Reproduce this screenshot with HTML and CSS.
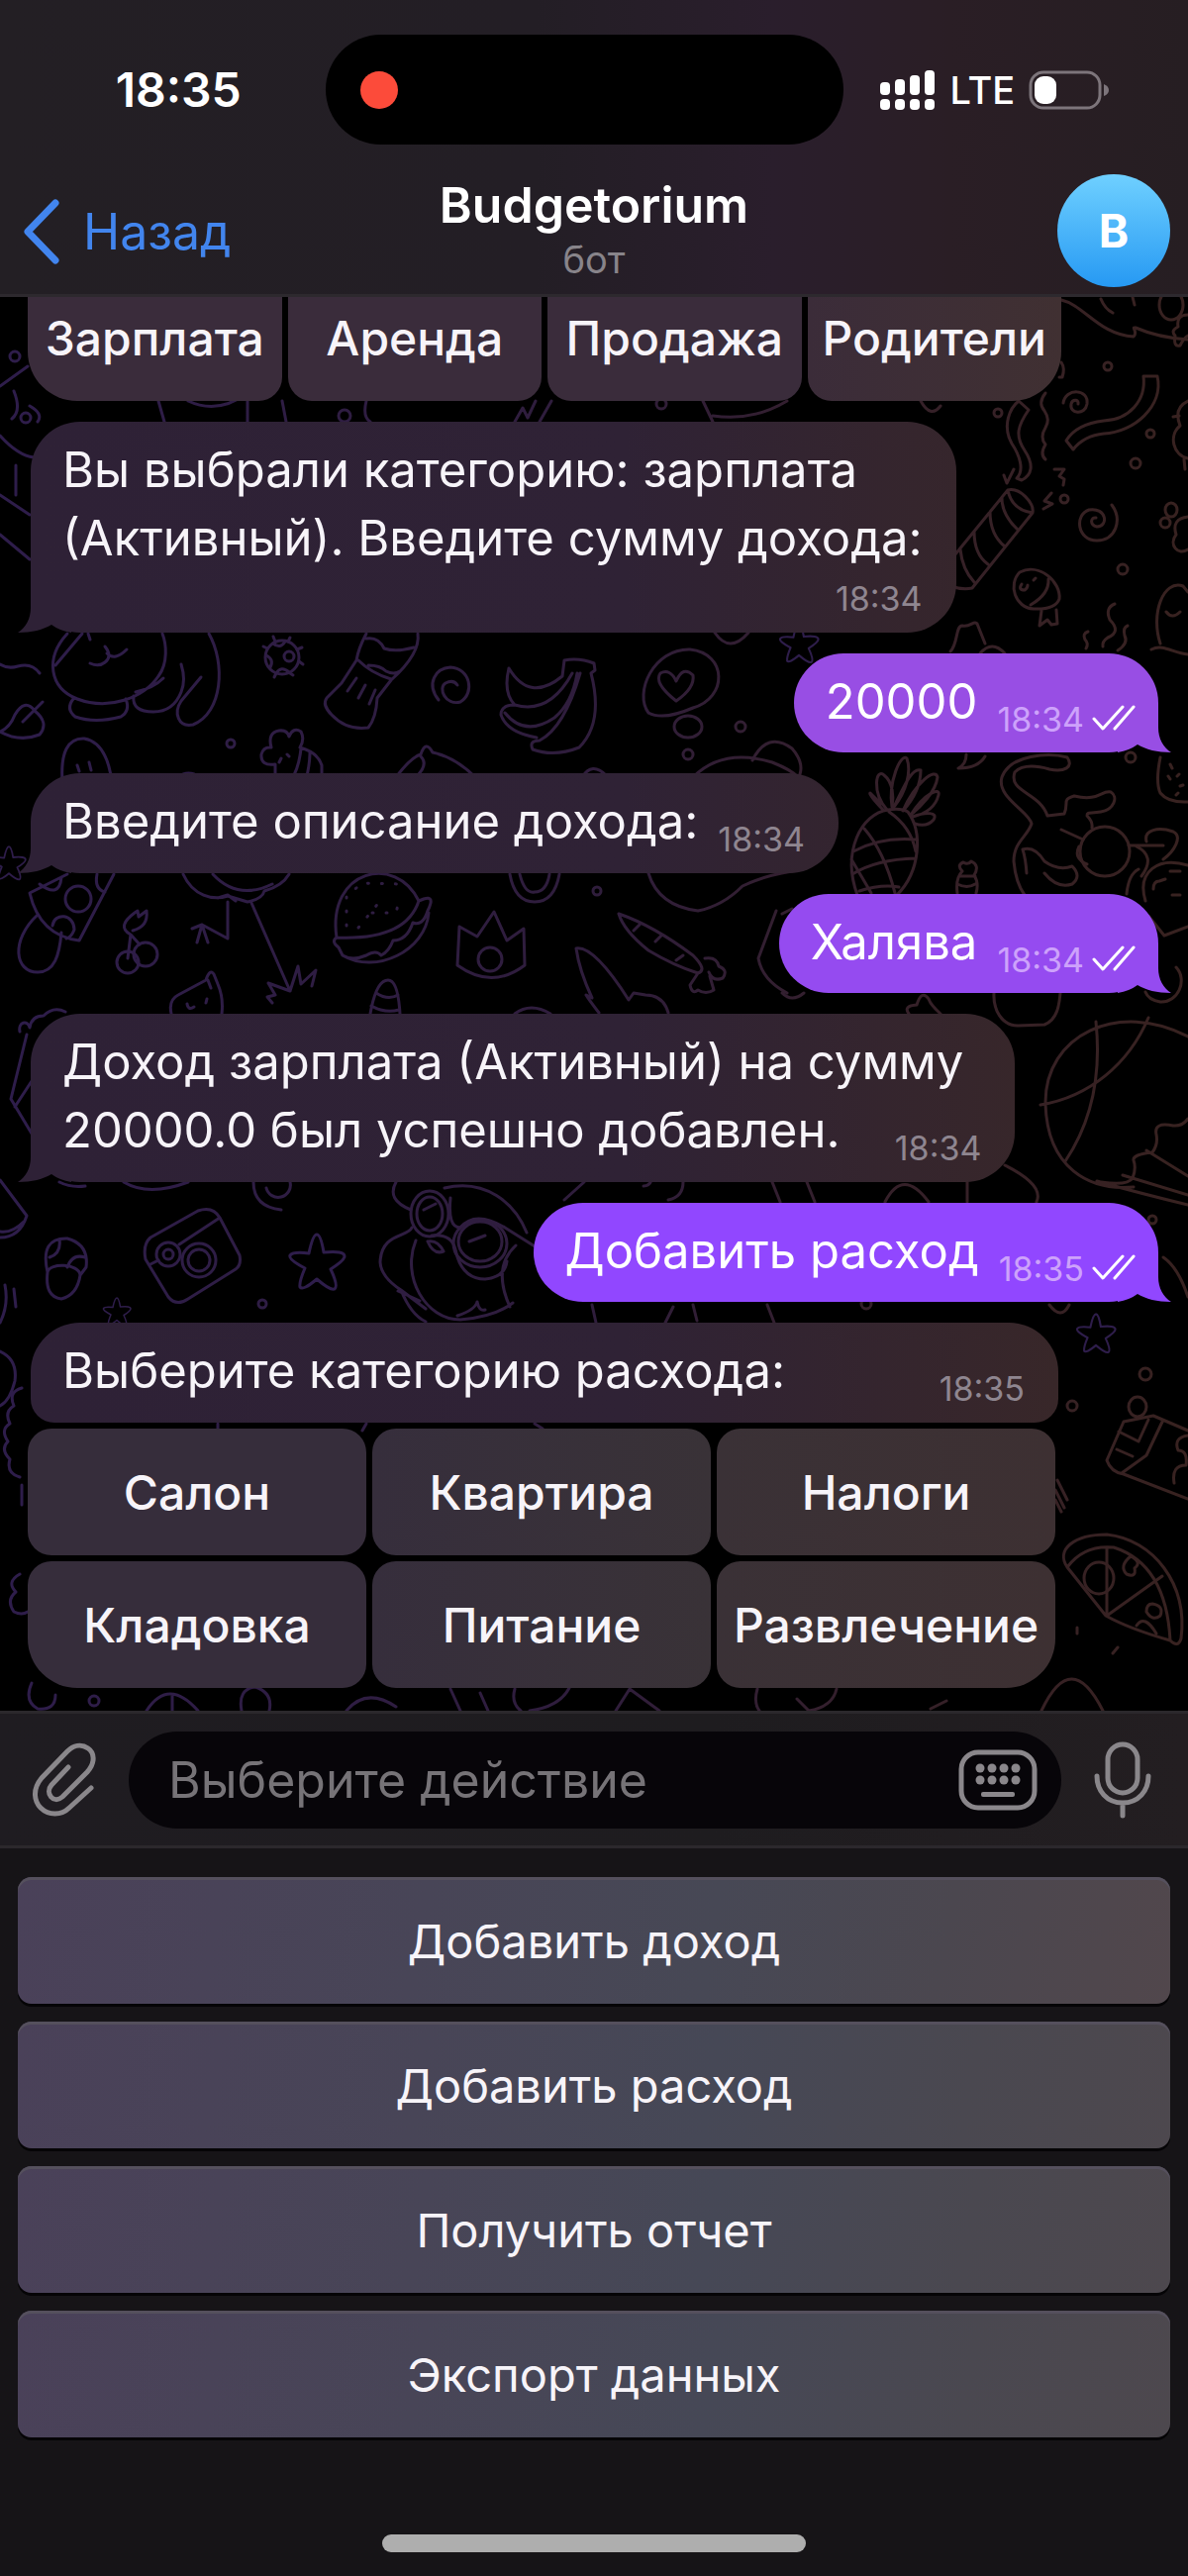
FILE: index.html
```html
<!DOCTYPE html>
<html lang="ru">
<head>
<meta charset="utf-8">
<meta name="viewport" content="width=device-width, initial-scale=1">
<title>Budgetorium</title>
<link rel="stylesheet" href="styles.css">
</head>
<body>
<div class="app">
  <header class="top">
    <div class="status">
      <time class="clock">18:35</time>
      <div class="island"><span class="rec"></span></div>
      <div class="signals">
        <svg width="58" height="42" viewBox="0 0 58 42" fill="#fff" aria-hidden="true">
          <rect x="1" y="13" width="10" height="13" rx="4"/><rect x="16" y="10" width="10" height="16" rx="4"/><rect x="31" y="6" width="10" height="20" rx="4"/><rect x="46" y="1" width="10" height="25" rx="4"/>
          <rect x="1" y="30" width="10" height="11" rx="4"/><rect x="16" y="30" width="10" height="11" rx="4"/><rect x="31" y="30" width="10" height="11" rx="4"/><rect x="46" y="30" width="10" height="11" rx="4"/>
        </svg>
        <span class="lte">LTE</span>
        <svg width="82" height="40" viewBox="0 0 82 40" aria-hidden="true">
          <rect x="2" y="2" width="70" height="36" rx="13" fill="none" stroke="#7d757b" stroke-width="3"/>
          <rect x="6" y="6" width="22" height="28" rx="9" fill="#fff"/>
          <path d="M76 14q5 2 5 6t-5 6z" fill="#7d757b"/>
        </svg>
      </div>
    </div>
    <div class="nav">
      <a class="back" href="#">
        <svg width="44" height="68" viewBox="0 0 44 68" fill="none" stroke="#4285ee" stroke-width="7" stroke-linecap="round" stroke-linejoin="round" aria-hidden="true"><path d="M38 5 10 34l28 29"/></svg>
        <span>Назад</span>
      </a>
      <div class="title"><h1>Budgetorium</h1><p>бот</p></div>
      <a class="avatar" href="#">B</a>
    </div>
  </header>

  <main class="chat">
    <svg class="wallpaper" viewBox="0 300 1200 1428" preserveAspectRatio="xMidYMin slice" aria-hidden="true">
      <defs>
        <linearGradient id="ink" gradientUnits="userSpaceOnUse" x1="0" y1="0" x2="1200" y2="0">
          <stop offset="0" stop-color="#2e1d4b"/><stop offset=".5" stop-color="#2f1d3c"/><stop offset=".75" stop-color="#352029"/><stop offset="1" stop-color="#382220"/>
        </linearGradient>
        <path id="star" d="M0-28Q4-28 7-10Q28-12 28-6Q28-2 14 7Q22 24 18 27Q14 29 0 17Q-14 29-17 25Q-18 20-12 6Q-29-3-27-7Q-24-11-8-9Q-4-28 0-28z"/>
      </defs>
      <g fill="none" stroke="url(#ink)" stroke-width="3" stroke-linecap="round" stroke-linejoin="round">
        <!-- streamers, candy and party cracker, upper right -->
        <path d="M1072 303C1095 308 1110 338 1145 340C1150 335 1142 330 1147 331Q1170 341 1200 343M1112 302q4 10 12 14M1144 300l2 8"/>
        <ellipse cx="1183" cy="308" rx="12" ry="15"/><path d="M1200 318q-12 0-10 12q-8 4-3 9q-2 12 5 10q4-8 8-10"/>
        <circle cx="1119" cy="370" r="4"/><circle cx="1008" cy="417" r="4"/><circle cx="1162" cy="438" r="4"/><circle cx="1147" cy="468" r="5"/><circle cx="1075" cy="504" r="4"/><circle cx="1134" cy="575" r="5"/>
        <path d="M1074 407C1076 392 1100 392 1098 408C1096 420 1080 418 1082 408C1083 403 1090 403 1089 408"/>
        <path d="M1155 380h14C1176 410 1145 437 1115 438Q1095 440 1084 454L1077 445C1085 432 1098 427 1115 425C1140 424 1158 405 1155 380z"/>
        <path d="M1200 405Q1185 412 1192 430C1180 440 1185 460 1200 463M1191 420l-6 1M1196 464l1 10"/>
        <path d="M1029 405L1039 414C1028 430 1025 440 1035 455C1045 470 1042 480 1032 485L1027 483C1035 475 1030 460 1022 448C1012 430 1020 412 1029 405"/>
        <path d="M1056 397q-8 10-1 18q6 9 1 17q-6 10 0 17q-6 10 0 15M1072 366q4 6 1 15h-3"/>
        <path d="M960 566L1018 495C1030 492 1045 508 1043 518L982 594Q972 596 960 592M1018 495Q1022 515 1043 518M1012 503Q1012 520 1028 535M1000 517Q1000 540 1015 552M984 537Q984 560 998 570M970 555Q972 575 984 588"/>
        <path d="M1014 480l3 8l7-14M1065 474h10l-5 7l5 3l-1 6M1062 498l-7 8l8 3l-9 5"/>
        <path d="M1123 510C1134 525 1127 546 1108 546C1088 546 1085 520 1100 515C1118 512 1120 532 1108 532C1100 530 1102 522 1107 523"/>
        <ellipse cx="1183" cy="515" rx="6" ry="7"/><circle cx="1177" cy="528" r="5"/><path d="M1200 522Q1183 524 1188 540C1180 550 1190 562 1200 555"/>
        <path d="M1044 615C1025 614 1018 590 1030 578C1050 568 1072 588 1070 605Q1066 616 1044 615M1059 585Q1060 600 1041 611M1052 617l-2 15l8-6l4 5l6-1l-1-14M1032 590q-4 6 3 6q3-2 3-5M1044 586l2-2"/>
        <path d="M1126 610q-10 4-5 16q12 12-2 18q-6 4-5 9M1139 632q-5 2-3 10q4 8-7 15M1099 638q-6 2-3 8q4 4 1 9"/>
        <path d="M1172 650C1162 620 1175 585 1195 592l5 6M1178 618q6 8 14 0M1163 656C1175 650 1185 660 1200 661"/>
        <path d="M960 658C968 650 965 632 972 632C980 634 984 626 987 630L995 650M990 660q12-14 25 0"/>
        <!-- strip under the first keyboard row -->
        <path d="M0 390L28 370M14 395q8 20-2 28M30 410q14 8 8 16M160 405l6 21M190 405q30 14 60-8v29M285 405l4 21M370 405q-4 16 4 21M520 426l8-14l5 10l8-17M545 426l12-21M710 405l10 21M720 420q40 6 75-15M930 405q10 18 20 5"/><circle cx="26" cy="422" r="5"/><circle cx="348" cy="420" r="6"/><circle cx="668" cy="408" r="5"/><circle cx="15" cy="360" r="5"/>
        <path d="M0 440q18 20 34 22M0 500l30 20M0 540l30 25M16 470v30"/>
        <!-- dog, sock, virus, bananas -->
        <path d="M68 640C45 665 50 695 78 706C110 718 145 705 160 683C170 670 168 650 164 640M83 640L56 672M89 640l2 6M106 653q8 10 0 16q-6 5-15 1M108 660q8 8 20-4M74 706q-8 10 2 18q20 7 46 0q10-6 5-18M135 703q-2 16 20 16q20 0 28-20q5-12 0-28M165 685q-10 10-28 14M211 640C228 670 225 720 195 732C180 735 175 720 183 708L203 684"/>
        <path d="M0 671q8 5 18 2q14-4 22 7M0 739Q10 735 15 722Q25 705 35 718Q50 730 40 742Q20 750 0 739M23 729L43 709"/>
        <circle cx="285" cy="664" r="17"/><circle cx="292" cy="663" r="5"/><path d="M276 650q7 6 12-2M269 662q8 4 4 12M279 680q5-8 13-1M278 648l-2-5M291 648l2-4M270 655l-4-2M300 656l5-2M302 668l4 3M279 680l-2 4M293 680l3 2"/>
        <path d="M370 640Q362 655 360 667L345 690L330 705Q325 712 335 722Q350 738 372 735Q380 725 381 705L395 687Q425 660 422 640M362 667Q375 680 395 686M370 645q12-2 18 10q12 4 30-1M372 672q12 0 18 6q8 4 14 0M360 685l-9 13M369 692l-7 13M379 697l-6 14"/>
        <path d="M443 707C430 690 440 675 455 674C475 675 480 700 465 709C450 713 442 695 450 690Q458 686 462 692"/><circle cx="233" cy="751" r="4"/>
        <path d="M63 790Q60 745 85 746Q108 750 113 790M78 773l2 6M90 770l2 8"/>
        <path d="M278 790v-18q-15 2-14-10q2-8 10-7q-4-15 8-17q8-1 10 6q4-10 12-5q4 8-1 16q18 5 22 18v12M304 756q-2 20-10 32M313 760q0 12-4 28M282 770l2-4M290 762l2 2"/>
        <path d="M400 785Q415 765 425 762q5-15 12-2Q460 765 480 785M425 764q8 8-4 20"/>
        <path d="M514 675Q535 710 568 683L570 667Q585 664 600 670L601 677L597 680Q610 730 585 755Q560 765 538 757Q534 748 545 748Q570 735 586 680M514 675Q508 700 520 712Q555 722 578 680M510 720Q530 745 560 725Q578 710 583 680M520 712Q506 712 506 722Q512 740 542 745"/>
        <path d="M655 720C640 700 660 655 697 656C735 660 735 705 700 715Q670 728 655 720M683 708Q660 690 667 680Q677 675 683 688Q690 672 700 682Q702 695 683 708"/>
        <ellipse cx="695" cy="734" rx="14" ry="11"/><circle cx="748" cy="734" r="5"/><circle cx="695" cy="762" r="5"/>
        <use href="#star" transform="translate(807 650) scale(.7)"/>
        <path d="M722 639q15 22 34 0M700 785Q730 755 780 770Q800 778 806 785M760 768q15-30 40-12q12 14 8 26M588 785q10-16 24-2M180 785q10-8 22 0"/>
        <!-- pineapple, cat and dog -->
        <path d="M897 818C870 822 850 860 866 904M917 820C932 840 930 880 906 904M897 818Q910 816 917 820M873 837Q893 860 904 902M898 820Q920 835 925 860M862 860Q890 845 925 848M861 883Q885 868 925 867M868 900Q890 893 908 896M860 868Q870 885 880 902"/>
        <path d="M896 818C880 800 885 775 893 783C902 790 903 805 901 815C897 790 910 760 916 766C921 780 915 800 903 815C915 790 922 775 930 778C930 795 922 808 912 819C925 790 945 775 947 785C945 800 930 815 920 823C935 800 950 795 948 803C945 815 935 822 922 825C935 820 948 820 943 828Q936 836 924 832M892 818Q877 802 879 801L890 812"/>
        <path d="M967 902q-2-15 5-22q-6-6 1-9q5 3 8-1q9 4 3 14q5 8 2 18M969 885h16M967 893q10 5 18 0M976 762q0 10-8 14q20 0 27-12"/>
        <path d="M1058 824C1050 800 1018 800 1025 780Q1035 770 1060 777C1075 780 1085 775 1078 765C1060 760 1020 762 1012 785C1006 805 1040 820 1042 832C1038 845 1024 850 1024 870Q1026 892 1035 904M1058 824L1075 822C1080 810 1072 808 1085 804C1110 810 1112 798 1122 800C1130 805 1125 818 1112 820C1100 822 1098 820 1098 824Q1104 830 1103 836M1037 882q-1-15-4-24q12-4 22 12q14 10 28 5q10 10 0 18Q1068 898 1055 882M1072 838l22 10M1090 855q-6 12 8 18"/>
        <circle cx="1116" cy="860" r="25"/><path d="M1140 854h35M1158 850C1155 838 1170 835 1185 840C1195 845 1186 860 1175 868M1148 855q20 10 5 30M1138 903q2-20 12-25M1157 910C1148 880 1170 865 1200 874M1182 880h10M1184 904h8M1165 898q0-8 6-8l6-2M1160 925L1176 945L1200 936M1172 765q-5 25 0 36q8 10 28 9M1182 772l2 4M1180 784l2 3M1189 784l2-2M1192 794l3-1M1188 803l2-2"/><circle cx="1142" cy="765" r="5"/>
        <!-- middle band -->
        <use href="#star" transform="translate(9 872) scale(.6)"/>
        <path d="M68 883L30 902Q40 945 80 950L115 883M40 893q20 15 22-7M98 883q-3 15 8 18M53 935c2-14 22-12 22 4q-3 8-8 9M38 924C10 950 15 982 38 982C55 982 60 965 62 942"/><circle cx="79" cy="908" r="13"/>
        <circle cx="147" cy="964" r="12"/><circle cx="129" cy="972" r="11"/><path d="M129 968L132 944L141 954M132 944q-15-8 4-22l3-2l1 6l8-6q2 16-14 20"/>
        <path d="M185 883C195 905 215 910 230 905L250 911Q265 908 267 900Q285 895 292 883M215 883Q240 910 275 893M220 907l10-3l8 6M230 911V948L204 934l-10 4M204 934l-5 18M204 934l6 18M254 912L293 1001l-22-8l7 12l-8 2l5 6M293 1001l8-25l3 18l15-14l-4 16"/>
        <path d="M173 1024Q170 1010 180 1005L208 990q4-12 8-6l4 10Q226 1008 224 1024M210 990l3 8M189 1014q1 7 7 3M208 1013l1-4"/>
        <path d="M340 947C330 878 400 862 423 910Q410 950 340 947q-6 4 2 10l4 8q10 6 24 0q10-6 15 0q8-4 12-15q14 0 20-18q10 4 15-12q8-16-4-12L423 910M346 965C380 985 430 960 433 922"/><path stroke-dasharray="1 13" d="M350 935V905L366 892L405 893M362 937L384 910M376 922h24l4-16"/>
        <path d="M462 975L464 936L482 946L499 921L512 950L529 938L530 975Q497 1000 462 975z"/><circle cx="495" cy="969" r="12"/>
        <path d="M374 1024Q380 990 392 990Q402 990 404 1024M380 1003q12 8 22 2M375 1016q14 8 28 4M515 883q5 28 25 28q20 0 25-28M525 883q5 20 15 18q12 0 15-18"/><circle cx="603" cy="900" r="4"/>
        <path d="M655 882Q665 915 705 920Q730 915 750 895Q770 885 800 880M625 923Q660 935 700 965Q715 980 705 983Q680 975 655 960Q630 940 625 923M705 983l-8 12q2 10 8 5q8 5 16 0l-4-14M712 968q12-2 14 8q10 4 4 12q-10 4-14-6M640 940l6-6M668 945l-6 6M690 965l-7 5"/>
        <path d="M605 1023Q595 1010 592 1005L598 1008Q585 980 582 958Q600 955 635 1010L640 1003L652 1005Q670 1005 675 1023M520 1024q16-12 36 0M800 918l-10 5M784 920L766 968Q770 990 795 1003M790 1003q10 10 22 0"/>
        <path d="M27 1045L11 1110L32 1145M20 1042c-2-10 8-12 10-4q2-12 14-12q10-10 22-4M15 1118L32 1092"/>
        <!-- basketball and shell, right -->
        <path d="M918 1024q-6-8 8-9q5-16 12-6q2 6 12 15M1004 1003C1003 1020 1012 1036 1028 1036L1055 1035C1068 1030 1070 1015 1071 1003M1188 977C1200 990 1190 1013 1172 1012Q1160 1010 1157 1002"/>
        <path d="M1200 1047C1130 1010 1055 1045 1056 1115C1058 1180 1100 1203 1145 1199M1107 1032C1112 1080 1105 1130 1076 1173M1160 1028C1140 1075 1100 1108 1051 1116M1200 1130q-6 8-15 7q-20-4-17 9q2 10-4 18q-20 2-19 8q3 8-1 18q-5 8-32 4M1134 1187L1200 1207M1158 1162L1200 1188M1108 1193Q1150 1205 1200 1217"/>
        <path d="M894 1214q18-35 44 0M977 1194v20M1015 1177q40 20 32 37M570 1212l20-18M690 1194q0 15-15 18M650 1198q6 0 8-6M780 1194l8 20M815 1194l8 20"/><circle cx="1164" cy="1232" r="4"/>
        <!-- camera, acorn, star, monkey in goggles -->
        <path d="M0 1192L27 1228Q20 1250 0 1250M24 1234Q12 1246 0 1244M5 1298q4 20-5 38M14 1302l2 18M125 1194q25 15 65 0M60 1194q12 6 26 4M256 1194q0 25 28 28M269 1200a10 10 0 1 0 24-6"/>
        <path d="M152 1250L200 1223Q215 1218 222 1230L242 1268Q244 1278 238 1282L190 1312Q178 1320 170 1310L147 1272Q144 1257 152 1250zM152 1277L160 1273M181 1257L222 1230"/><circle cx="170" cy="1267" r="12"/><circle cx="170" cy="1267" r="5"/><circle cx="201" cy="1273" r="17"/><circle cx="201" cy="1273" r="11"/>
        <use href="#star" x="320" y="1275"/><use href="#star" transform="translate(118 1325) scale(.5)"/><circle cx="265" cy="1317" r="4"/>
        <path d="M48 1285Q40 1250 68 1251Q90 1257 87 1280L81 1288C80 1276 50 1275 48 1285Q45 1310 62 1312Q78 1308 81 1288M50 1270q12-4 10-18M68 1280q5-14 18-10"/>
        <ellipse cx="434" cy="1226" rx="19" ry="23"/><ellipse cx="434" cy="1226" rx="13" ry="17"/><ellipse cx="485" cy="1256" rx="27" ry="24"/><ellipse cx="485" cy="1254" rx="22" ry="20"/>
        <path d="M400 1194Q390 1212 415 1222M416 1240C412 1250 385 1245 384 1275Q385 1290 405 1303L430 1322M420 1253C405 1290 430 1333 465 1333Q500 1330 518 1316M449 1200C490 1190 520 1215 532 1245M455 1210Q452 1240 465 1240Q480 1222 510 1240L545 1262M436 1248q20-2 24 14q6 30 30 30q20-2 22-18M405 1303q10 25 25 32M402 1304l22 10M482 1315q-2 8-20 14M482 1315q2 10 8 8M432 1254q10-2 16 10q-10 4-16-10M428 1222l12-6M474 1254l16-6M515 1320q-18-40 6-62"/>
        <!-- gift, pizza, sun and scallops -->
        <path d="M598 1318l4 18M680 1320l-8 16M700 1318l4 16M775 1318l7 18M1060 1318q12 16 20 0M1175 1270q15 10 25 40"/><circle cx="875" cy="1317" r="5"/><use href="#star" transform="translate(1107 1347) scale(.7)"/><circle cx="1157" cy="1388" r="6"/><circle cx="1083" cy="1420" r="5"/>
        <ellipse cx="1149" cy="1421" rx="9" ry="10"/><path d="M1200 1445L1165 1430L1135 1436L1118 1475Q1122 1487 1135 1489L1200 1514M1175 1434L1158 1470L1133 1488M1130 1446L1150 1456L1160 1434M1128 1464l16 7M1200 1450q-15 2-10 15q10 0 8 15q-15 0-12 18M1068 1495l10 20M1066 1505l9 18M1066 1515l6 12"/>
        <path d="M1078 1583C1066 1565 1085 1550 1118 1550C1165 1555 1200 1600 1193 1655Q1190 1665 1182 1657Q1140 1645 1117 1632L1078 1583M1078 1583Q1095 1560 1125 1563Q1178 1580 1182 1657M1118 1563V1632L1174 1592M1142 1572q12 6 4 12q2 10-8 6q-8-8 4-18M1164 1620q12 2 8 12q-8 6-14-4q0-8 6-8M1148 1642q8-12 20 8"/><ellipse cx="1110" cy="1594" rx="15" ry="16"/>
        <path d="M1052 1728q30-64 62 0M1088 1650v-6M1040 1668l-6-8M1124 1670l5-6M22 1402q-14 4-8 18q-10 6-4 18q-10 6-2 18q-8 8 2 18q-4 14 10 18M22 1500v20M20 1590q-14 8-4 18q-10 8-2 20q8 4 14 0M0 1365q18 8 15 30q-5 20-15 25"/>
        <circle cx="95" cy="1718" r="5"/><path d="M32 1700q-8 18 6 26q18 2 18-14M148 1728q22-34 52 0M174 1713v15M244 1728q-4-22 14-24q18 6 14 24M350 1728q20-24 50-4M455 1706l10 22M485 1710l8 18M520 1706q-4 14 6 22M535 1728q30-4 40-23M622 1728l14-22l30 22M765 1706q-4 14 2 22M805 1716l12 12q24-4 28-22M940 1726l16-8"/>
        <path d="M220 1438v5M370 1438l-4 7M540 1438l8 5"/>
      </g>
    </svg>

    <div class="keys keys-cut">
      <button>Зарплата</button><button>Аренда</button><button>Продажа</button><button>Родители</button>
    </div>

    <article class="msg in stacked">
      <p>Вы выбрали категорию: зарплата<br>(Активный). Введите сумму дохода:</p><time>18:34</time>
      <svg class="tail" viewBox="0 0 54 50" aria-hidden="true"><path d="M13 0V25C13 36 8 45 0 50C14 50 26 47 34 42Q42 48 54 50V0z"/></svg>
    </article>
    <article class="msg out warm">
      <p>20000</p><time>18:34</time>
      <svg class="checks" viewBox="0 0 44 26" aria-hidden="true"><path d="M2 14l9 10L31 2M23 24L42 2"/></svg>
      <svg class="tail" viewBox="0 0 54 50" aria-hidden="true"><path d="M13 0V25C13 36 8 45 0 50C14 50 26 47 34 42Q42 48 54 50V0z"/></svg>
    </article>
    <article class="msg in">
      <p>Введите описание дохода:</p><time>18:34</time>
      <svg class="tail" viewBox="0 0 54 50" aria-hidden="true"><path d="M13 0V25C13 36 8 45 0 50C14 50 26 47 34 42Q42 48 54 50V0z"/></svg>
    </article>
    <article class="msg out mid">
      <p>Халява</p><time>18:34</time>
      <svg class="checks" viewBox="0 0 44 26" aria-hidden="true"><path d="M2 14l9 10L31 2M23 24L42 2"/></svg>
      <svg class="tail" viewBox="0 0 54 50" aria-hidden="true"><path d="M13 0V25C13 36 8 45 0 50C14 50 26 47 34 42Q42 48 54 50V0z"/></svg>
    </article>
    <article class="msg in overlap">
      <p>Доход зарплата (Активный) на сумму<br>20000.0 был успешно добавлен.</p><time>18:34</time>
      <svg class="tail" viewBox="0 0 54 50" aria-hidden="true"><path d="M13 0V25C13 36 8 45 0 50C14 50 26 47 34 42Q42 48 54 50V0z"/></svg>
    </article>
    <article class="msg out">
      <p>Добавить расход</p><time>18:35</time>
      <svg class="checks" viewBox="0 0 44 26" aria-hidden="true"><path d="M2 14l9 10L31 2M23 24L42 2"/></svg>
      <svg class="tail" viewBox="0 0 54 50" aria-hidden="true"><path d="M13 0V25C13 36 8 45 0 50C14 50 26 47 34 42Q42 48 54 50V0z"/></svg>
    </article>
    <div class="prompt">
      <article class="msg in wide"><p>Выберите категорию расхода:</p><time>18:35</time></article>
      <div class="keys keys-grid">
        <button>Салон</button><button>Квартира</button><button>Налоги</button>
        <button>Кладовка</button><button>Питание</button><button>Развлечение</button>
      </div>
    </div>
  </main>

  <footer class="bottom">
    <form class="composer">
      <button class="icon" type="button" aria-label="Прикрепить">
        <svg width="66" height="76" viewBox="0 0 66 76" fill="none" stroke="#8a878b" stroke-width="5" stroke-linecap="round" stroke-linejoin="round"><path d="M37 25L20 43C13 51 22 63 31 55L56 30C65 20 63 10 57 6C50 1 42 3 36 9L10 36C0 48 3 60 9 66C17 74 30 74 38 66L60 46"/></svg>
      </button>
      <div class="field">
        <input id="message" type="text" placeholder="Выберите действие" aria-label="Сообщение">
        <button class="icon" type="button" aria-label="Клавиатура">
          <svg width="80" height="62" viewBox="0 0 80 62" fill="#8a878b"><rect x="3" y="3" width="74" height="56" rx="17" fill="none" stroke="#8a878b" stroke-width="5"/><circle cx="22" cy="19" r="4.500"/><circle cx="34" cy="19" r="4.500"/><circle cx="46" cy="19" r="4.500"/><circle cx="58" cy="19" r="4.500"/><circle cx="22" cy="31" r="4.500"/><circle cx="34" cy="31" r="4.500"/><circle cx="46" cy="31" r="4.500"/><circle cx="58" cy="31" r="4.500"/><rect x="23" y="43" width="34" height="5" rx="2"/></svg>
        </button>
      </div>
      <button class="icon" type="button" aria-label="Голосовое сообщение">
        <svg width="60" height="78" viewBox="0 0 60 78" fill="none" stroke="#8a878b" stroke-width="5" stroke-linecap="round"><rect x="15" y="3" width="30" height="49" rx="15"/><path d="M4 35C4 50 14 62 30 62S56 50 56 35M30 62V75"/></svg>
      </button>
    </form>
    <div class="replies">
      <button>Добавить доход</button>
      <button>Добавить расход</button>
      <button>Получить отчет</button>
      <button>Экспорт данных</button>
    </div>
    <div class="home"></div>
  </footer>
</div>
</body>
</html>
```
FILE: styles.css
```css
* { box-sizing: border-box; }

body {
  margin: 0;
  background: #161417;
  color: #f7f4f9;
  font-family: Inter, "Liberation Sans", sans-serif;
  font-size: 50px;
}

h1, p { margin: 0; }

button {
  border: 0;
  padding: 0;
  background: none;
  color: inherit;
  font: inherit;
}

svg { display: block; flex: none; }

.app {
  min-height: 100vh;
  display: flex;
  flex-direction: column;
}

/* Header */
.top {
  height: 300px;
  border-bottom: 3px solid #2d292e;
  background: linear-gradient(90deg, #231f24 0%, #231e25 45%, #2a1e2c 65%, #2a1e25 80%, #261e22 100%);
}

.status {
  height: 146px;
  padding: 35px 20px 0 0;
  display: grid;
  grid-template-columns: 1fr 523px 1fr;
  gap: 20px;
}

.clock {
  align-self: center;
  justify-self: center;
  padding-left: 52px;
  font-size: 48px;
  font-weight: 600;
  color: #fff;
}

.island {
  height: 111px;
  padding-left: 35px;
  border-radius: 56px;
  background: #000;
  display: flex;
  align-items: center;
}

.rec {
  width: 38px;
  height: 38px;
  border-radius: 50%;
  background: #fc4b3a;
}

.signals {
  padding-left: 16px;
  display: flex;
  align-items: center;
  gap: 14px;
}

.lte { font-size: 38px; font-weight: 500; color: #fff; }

.nav {
  height: 151px;
  padding: 29px 18px 0;
  display: grid;
  grid-template-columns: 1fr auto 1fr;
}

.back {
  height: 118px;
  display: flex;
  align-items: center;
  gap: 22px;
  color: #4285ee;
  text-decoration: none;
}

.title { text-align: center; }
.title h1 { font-size: 50px; line-height: 64px; font-weight: 600; color: #fff; }
.title p { font-size: 38px; line-height: 46px; color: #88848a; }

.avatar {
  width: 114px;
  height: 114px;
  margin-top: 1px;
  justify-self: end;
  border-radius: 50%;
  background: linear-gradient(#6fd0ff, #2699f3);
  color: #fff;
  font-size: 46px;
  line-height: 114px;
  font-weight: 700;
  text-align: center;
  text-decoration: none;
}

/* Conversation */
.chat {
  position: relative;
  overflow: hidden;
  padding-bottom: 23px;
  background: #000;
  display: flex;
  flex-direction: column;
  gap: 21px;
}

.wallpaper {
  position: absolute;
  inset: 0;
  width: 100%;
  height: 100%;
}

.keys { position: relative; display: grid; gap: 6px; }

.keys button {
  border-radius: 24px;
  font-size: 48px;
  font-weight: 500;
}

.keys-cut {
  width: 1044px;
  margin-left: 28px;
  grid-template-columns: repeat(4, 1fr);
}

.keys-cut button {
  height: 105px;
  padding-bottom: 23px;
  border-radius: 0 0 24px 24px;
  background: #3a2c3b;
}

.keys-cut button:first-child { border-bottom-left-radius: 50px; }
.keys-cut button:last-child {
  border-bottom-right-radius: 50px;
  background: linear-gradient(90deg, #3b2c39, #403032);
}

.msg {
  position: relative;
  isolation: isolate;
  display: flex;
  gap: 20px;
  padding: 14px 34px 14px 32px;
  border-radius: 50px;
}

.msg p { font-size: 49px; line-height: 69px; padding-bottom: 4px; white-space: nowrap; }

.msg time {
  align-self: flex-end;
  font-size: 34px;
  line-height: 40px;
  color: #8f8690;
}

.in {
  align-self: flex-start;
  margin-left: 31px;
  background: linear-gradient(90deg, #2e2136 0, #2f2235 600px, #382729 1040px);
}

.stacked { flex-direction: column; gap: 3px; }

.overlap { display: grid; }
.overlap p, .overlap time { grid-area: 1 / 1; }
.overlap p { padding-right: 18px; }
.overlap time { justify-self: end; }

.out {
  align-self: flex-end;
  margin-right: 30px;
  padding: 14px 23px 13px 32px;
  background: #9147ff;
  color: #fff;
  --bubble: #9147ff;
}

.out.warm { background: #984ee4; --bubble: #984ee4; }
.out.mid { background: #954bf0; --bubble: #954bf0; }
.out time { color: #cda2fb; }

.checks {
  width: 44px;
  height: 26px;
  align-self: flex-end;
  margin: 0 0 9px -12px;
  fill: none;
  stroke: #fff;
  stroke-width: 3;
  stroke-linecap: round;
  stroke-linejoin: round;
}

/* Sits behind the bubble's text, over its background */
.tail {
  position: absolute;
  z-index: -1;
  bottom: 0;
  left: -13px;
  width: 54px;
  height: 50px;
  fill: #2e2136;
}

.out .tail {
  left: auto;
  right: -13px;
  transform: scaleX(-1);
  fill: var(--bubble);
}

.prompt { width: 1072px; display: grid; gap: 6px; }

.wide {
  justify-content: space-between;
  margin-right: 3px;
  border-radius: 50px 50px 24px 24px;
  align-self: stretch;
}

.keys-grid {
  margin: 0 6px 0 28px;
  grid-template-columns: repeat(3, 1fr);
}

.keys-grid button { height: 128px; background: #362d3b; }
.keys-grid button:nth-child(3n + 2) { background: linear-gradient(90deg, #362e3c, #393237); }
.keys-grid button:nth-child(3n) { background: linear-gradient(90deg, #3a3136, #3d3032); }
.keys-grid button:nth-child(4) { border-bottom-left-radius: 50px; }
.keys-grid button:nth-child(6) { border-bottom-right-radius: 50px; }

/* Composer and reply keyboard */
.bottom { flex: 1; display: flex; flex-direction: column; }

.composer {
  height: 139px;
  padding: 0 36px 0 32px;
  border-top: 3px solid #2b282c;
  border-bottom: 3px solid #2b282c;
  background: linear-gradient(90deg, #1f1c21, #1e1c1f 60%, #231e21);
  display: flex;
  align-items: center;
  gap: 32px;
}

.field {
  flex: 1;
  height: 98px;
  padding: 0 24px 0 40px;
  border-radius: 49px;
  background: #070509;
  display: flex;
  align-items: center;
}

.field input {
  flex: 1;
  min-width: 0;
  border: 0;
  padding: 0;
  background: none;
  color: #fff;
  font: inherit;
  outline: 0;
}

.field input::placeholder { color: #767377; opacity: 1; }

.replies {
  padding: 29px 18px 0;
  display: grid;
  gap: 18px;
}

.replies button {
  height: 128px;
  border-radius: 14px;
  background: linear-gradient(100deg, #4a4159 0%, #484557 35%, #474855 60%, #4b474f 80%, #51474c 100%);
  box-shadow: 0 3px 0 #050406, inset 0 3px 0 #55505d;
  font-size: 47px;
}

.replies button:nth-child(n + 2) {
  background: linear-gradient(100deg, #4a4159 0%, #484557 35%, #464856 60%, #4a4850 82%, #4d484e 100%);
}

.home {
  width: 428px;
  height: 18px;
  margin: auto auto 24px;
  border-radius: 9px;
  background: #aeaeae;
}
```
